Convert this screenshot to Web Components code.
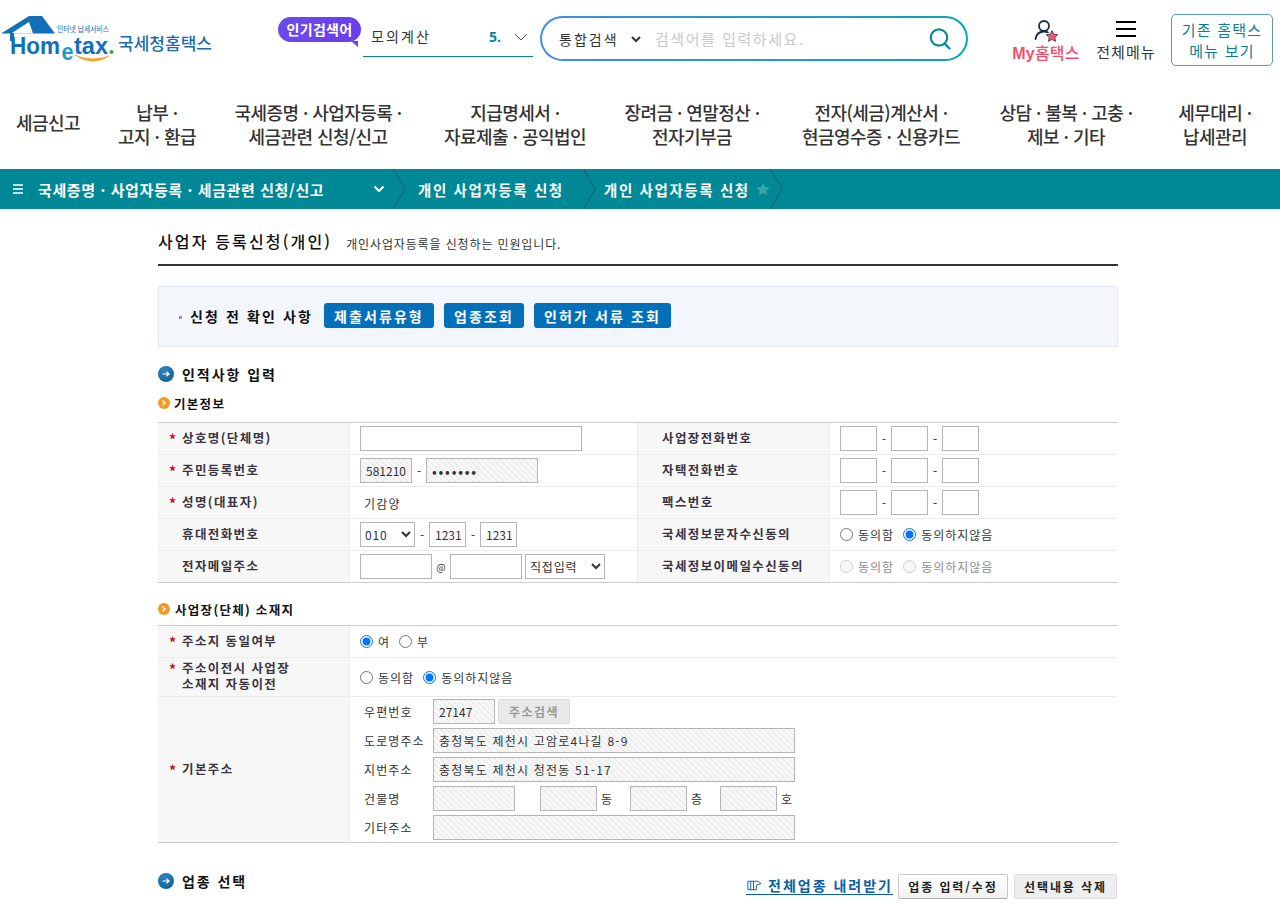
<!DOCTYPE html>
<html lang="ko">
<head>
<meta charset="utf-8">
<title>사업자 등록신청(개인)</title>
<style>
html,body{margin:0;padding:0;background:#fff;overflow:hidden;height:905px}
body{font-family:"Noto Sans CJK KR","Noto Sans",sans-serif;color:#333}
</style>
</head>
<body>
<ht-header></ht-header>
<ht-gnb>
  <ht-gnb-item w="96" solo>세금신고</ht-gnb-item>
  <ht-gnb-item w="122">납부 ·<br>고지 · 환급</ht-gnb-item>
  <ht-gnb-item w="200">국세증명 · 사업자등록 ·<br>세금관련 신청/신고</ht-gnb-item>
  <ht-gnb-item w="194">지급명세서 ·<br>자료제출 · 공익법인</ht-gnb-item>
  <ht-gnb-item w="160">장려금 · 연말정산 ·<br>전자기부금</ht-gnb-item>
  <ht-gnb-item w="218">전자(세금)계산서 ·<br>현금영수증 · 신용카드</ht-gnb-item>
  <ht-gnb-item w="152">상담 · 불복 · 고충 ·<br>제보 · 기타</ht-gnb-item>
  <ht-gnb-item w="138" shift="8">세무대리 ·<br>납세관리</ht-gnb-item>
</ht-gnb>
<ht-crumbs></ht-crumbs>
<ht-page>
  <ht-title sub="개인사업자등록을 신청하는 민원입니다.">사업자 등록신청(개인)</ht-title>
  <ht-check>
    <ht-btn style="width:110px">제출서류유형</ht-btn><ht-btn style="width:80px">업종조회</ht-btn><ht-btn style="width:137px">인허가 서류 조회</ht-btn>
  </ht-check>
  <ht-section style="margin-top:18px">인적사항 입력</ht-section>
  <ht-sub style="margin-top:12px">기본정보</ht-sub>
  <ht-table style="margin-top:11px">
    <ht-th req>상호명(단체명)</ht-th>
    <ht-td><ht-box style="width:222px"></ht-box></ht-td>
    <ht-th>사업장전화번호</ht-th>
    <ht-td last><ht-box style="width:37px"></ht-box><ht-dash>-</ht-dash><ht-box style="width:37px"></ht-box><ht-dash>-</ht-dash><ht-box style="width:37px"></ht-box></ht-td>

    <ht-th req>주민등록번호</ht-th>
    <ht-td><ht-box hatch num style="width:52px">581210</ht-box><ht-dash>-</ht-dash><ht-box hatch dots style="width:112px">•••••••</ht-box></ht-td>
    <ht-th>자택전화번호</ht-th>
    <ht-td last><ht-box style="width:37px"></ht-box><ht-dash>-</ht-dash><ht-box style="width:37px"></ht-box><ht-dash>-</ht-dash><ht-box style="width:37px"></ht-box></ht-td>

    <ht-th req>성명(대표자)</ht-th>
    <ht-td><ht-plain>기감양</ht-plain></ht-td>
    <ht-th>팩스번호</ht-th>
    <ht-td last><ht-box style="width:37px"></ht-box><ht-dash>-</ht-dash><ht-box style="width:37px"></ht-box><ht-dash>-</ht-dash><ht-box style="width:37px"></ht-box></ht-td>

    <ht-th>휴대전화번호</ht-th>
    <ht-td><ht-select w="55" opt="010"></ht-select><ht-dash>-</ht-dash><ht-box num style="width:37px">1231</ht-box><ht-dash>-</ht-dash><ht-box num style="width:37px">1231</ht-box></ht-td>
    <ht-th>국세정보문자수신동의</ht-th>
    <ht-td last><ht-radio name="sms">동의함</ht-radio><ht-radio name="sms" checked>동의하지않음</ht-radio></ht-td>

    <ht-th end>전자메일주소</ht-th>
    <ht-td end><ht-box style="width:72px"></ht-box><ht-dash at>@</ht-dash><ht-box style="width:72px"></ht-box><ht-select w="80" opt="직접입력" style="margin-left:3px"></ht-select></ht-td>
    <ht-th end>국세정보이메일수신동의</ht-th>
    <ht-td end last><ht-radio name="em" disabled>동의함</ht-radio><ht-radio name="em" disabled>동의하지않음</ht-radio></ht-td>
  </ht-table>

  <ht-sub style="margin-top:18px;gap:5px">사업장(단체) 소재지</ht-sub>
  <ht-table wide style="margin-top:8px">
    <ht-th req h="32">주소지 동일여부</ht-th>
    <ht-td h="32" last><ht-radio name="same" checked>여</ht-radio><ht-radio name="same">부</ht-radio></ht-td>
    <ht-th req h="39">주소이전시 사업장<br>소재지 자동이전</ht-th>
    <ht-td h="39" last><ht-radio name="mv">동의함</ht-radio><ht-radio name="mv" checked>동의하지않음</ht-radio></ht-td>
    <ht-th req end h="146">기본주소</ht-th>
    <ht-td end last h="146">
      <ht-addr>
        <ht-addr-row label="우편번호"><ht-box hatch num style="width:62px">27147</ht-box><ht-mini>주소검색</ht-mini></ht-addr-row>
        <ht-addr-row label="도로명주소"><ht-box hatch style="width:362px">충청북도 제천시 고암로4나길 8-9</ht-box></ht-addr-row>
        <ht-addr-row label="지번주소"><ht-box hatch style="width:362px">충청북도 제천시 청전동 51-17</ht-box></ht-addr-row>
        <ht-addr-row label="건물명"><ht-box hatch style="width:82px"></ht-box><ht-box hatch style="width:57px;margin-left:25px"></ht-box><ht-unit>동</ht-unit><ht-box hatch style="width:57px"></ht-box><ht-unit>층</ht-unit><ht-box hatch style="width:57px"></ht-box><ht-unit>호</ht-unit></ht-addr-row>
        <ht-addr-row label="기타주소"><ht-box hatch style="width:362px"></ht-box></ht-addr-row>
      </ht-addr>
    </ht-td>
  </ht-table>

  <ht-biz-head style="margin-top:28px"></ht-biz-head>
</ht-page>

<script>
const FONT = '"Noto Sans CJK KR","Noto Sans",sans-serif';
function def(name, css, html, extra){
  class C extends HTMLElement{
    constructor(){super();this.attachShadow({mode:'open'}).innerHTML='<style>'+css+'</style>'+(typeof html==='function'?'':html);}
    connectedCallback(){
      if(typeof html==='function'){this.shadowRoot.innerHTML='<style>'+css+'</style>'+html(this);}
      if(extra)extra(this);
    }
  }
  customElements.define(name,C);
}

/* ---------- header ---------- */
def('ht-logo',':host{display:block;width:212px;height:50px;flex:none}svg{display:block}',`
<svg width="212" height="50" viewBox="0 0 212 50">
  <path d="M1 18.5 L29 1 L42 1 L55 18.5 Z" fill="#1270b8"/>
  <path d="M11 18.5 L29 7 L33 18.5 Z" fill="#fff"/>
  <path d="M10 18 H14 V26 H10 Z" fill="#1270b8"/>
  <text x="10" y="39" font-family="Liberation Sans" font-weight="700" font-size="24.5" fill="#1270b8" textLength="50" lengthAdjust="spacingAndGlyphs">Hom</text>
  <text x="61.5" y="45" font-family="Liberation Sans" font-weight="700" font-size="23" fill="#1a9bc4" textLength="12" lengthAdjust="spacingAndGlyphs">e</text>
  <text x="74" y="39" font-family="Liberation Sans" font-weight="700" font-size="24" fill="#1270b8" textLength="34" lengthAdjust="spacingAndGlyphs">tax</text>
  <circle cx="111.5" cy="37" r="2" fill="#3da535"/>
  <path d="M75 40 Q92 52 109 41 Q92 47 75 40 Z" fill="#f3a52c" stroke="#f3a52c" stroke-width=".6"/>
  <text x="57" y="17" font-family="Noto Sans CJK KR" font-size="8" fill="#1a6cb0" textLength="52" lengthAdjust="spacingAndGlyphs">인터넷 납세서비스</text>
  <text x="118" y="35" font-family="Noto Sans CJK KR" font-weight="500" font-size="16.5" fill="#1a6cb0" textLength="94" lengthAdjust="spacingAndGlyphs">국세청홈택스</text>
</svg>`);

def('ht-badge',`:host{display:block;position:relative;flex:none;width:83px;height:25px;margin:17px 0 0 66px;border-radius:13px;background:linear-gradient(90deg,#6a4be8,#6a3df0);color:#fff;font-size:14px;font-weight:700;line-height:24px;text-align:center;letter-spacing:.3px}
:host::after{content:"";position:absolute;right:3px;bottom:-5px;border-left:7px solid transparent;border-top:6px solid #6a3df0}`,'<slot></slot>');

def('ht-rank',`:host{display:flex;align-items:center;flex:none;box-sizing:border-box;width:170px;height:40px;margin:17px 0 0 2px;padding:0 5px 0 8px;border-bottom:1px solid #008896;font-size:14px;color:#333;letter-spacing:2.1px}
.t{flex:1;padding-bottom:1px}b{color:#008896;font-family:"Open Sans",sans-serif;font-size:14px;margin-right:13px;letter-spacing:0}svg{display:block}`,
`<span class="t">모의계산</span><b>5.</b><svg width="14" height="8" viewBox="0 0 14 8"><path d="M1 1 L7 7 L13 1" fill="none" stroke="#555" stroke-width="1"/></svg>`);

def('ht-search',`:host{display:flex;align-items:center;flex:none;box-sizing:border-box;width:428px;height:45px;margin:16px 0 0 7px;padding:0 14px 0 13px;border:2px solid transparent;border-radius:23px;background:linear-gradient(#fff,#fff) padding-box,linear-gradient(90deg,#3f8fe6,#07a8b4) border-box}
select{border:0;background:#fff;font:14px ${FONT};color:#333;width:89px;padding:0;outline:0;letter-spacing:2px}
.ph{flex:1;font-size:15px;color:#c9c9c9;letter-spacing:1.55px;margin-left:11px}svg{display:block}`,
`<select><option>통합검색</option></select><span class="ph">검색어를 입력하세요.</span><svg width="24" height="24" viewBox="0 0 24 24"><circle cx="11" cy="10.5" r="8.2" fill="none" stroke="#0a8a98" stroke-width="2.2"/><path d="M16.5 16.5 L21.5 21.5" stroke="#0a8a98" stroke-width="2.4" stroke-linecap="round"/></svg>`);

def('ht-my',`:host{display:flex;flex-direction:column;align-items:center;flex:none;width:68px;margin:19px 0 0 44px;font-size:16px;font-weight:500;color:#f2506e;letter-spacing:.2px;line-height:22px;white-space:nowrap}svg{display:block;margin-bottom:-2px}b{font-family:"Liberation Sans",sans-serif;font-weight:700}`,
`<svg width="28" height="24" viewBox="0 0 28 24"><circle cx="12" cy="7" r="5" fill="none" stroke="#1b2a49" stroke-width="1.8"/><path d="M3.5 20 C4.5 14 8 12.5 12 12.5 C13.5 12.5 15 12.8 16 13.4" fill="none" stroke="#1b2a49" stroke-width="1.8" stroke-linecap="round"/><path d="M20 11.5 L21.8 15.2 L25.8 15.7 L22.9 18.4 L23.6 22.4 L20 20.5 L16.4 22.4 L17.1 18.4 L14.2 15.7 L18.2 15.2 Z" fill="#f4566f" stroke="#1b2a49" stroke-width=".7"/></svg><span><b>My</b>홈택스</span>`);

def('ht-allmenu',`:host{display:flex;flex-direction:column;align-items:center;flex:none;width:60px;margin:21px 0 0 16px;font-size:15px;color:#333;letter-spacing:1.1px;line-height:22px;white-space:nowrap}svg{display:block;margin-bottom:4px}`,
`<svg width="20" height="16" viewBox="0 0 20 16"><path d="M0 1 H20 M0 8 H20 M0 15 H20" stroke="#000" stroke-width="2"/></svg><span>전체메뉴</span>`);

def('ht-old',`:host{display:block;flex:none;box-sizing:border-box;width:102px;height:52px;margin:14px 0 0 15px;border:1px solid #5a9ea8;border-radius:5px;color:#0b7f8c;font-size:15px;line-height:21px;text-align:center;padding-top:4px;letter-spacing:1.2px}`,'<slot></slot>');

def('ht-header',`:host{display:flex;align-items:flex-start;height:85px}ht-logo{margin-top:15px}`,
`<ht-logo></ht-logo><ht-badge>인기검색어</ht-badge><ht-rank></ht-rank><ht-search></ht-search><ht-my></ht-my><ht-allmenu></ht-allmenu><ht-old>기존 홈택스<br>메뉴 보기</ht-old>`);

/* ---------- gnb ---------- */
def('ht-gnb',`:host{display:flex;align-items:center;box-sizing:border-box;height:84px;padding-bottom:6px}`,'<slot></slot>');
def('ht-gnb-item',`:host{display:block;flex:none;box-sizing:border-box;text-align:center;font-size:18px;font-weight:500;letter-spacing:-.55px;line-height:24px;color:#333}:host([solo]){margin-bottom:4px}`,'<slot></slot>',
 el=>{el.style.width=el.getAttribute('w')+'px';if(el.hasAttribute('shift'))el.style.paddingLeft=el.getAttribute('shift')+'px';});

/* ---------- crumbs ---------- */
const SEP='<svg width="13" height="40" viewBox="0 0 13 40" style="flex:none"><path d="M0.5 0 L12 20 L0.5 40" fill="none" stroke="#0a5a6a" stroke-width="1"/></svg>';
def('ht-crumbs',`:host{display:flex;align-items:center;height:40px;background:#008896;color:#fff}
.burger{margin:0 15px 0 13px}.sec{display:block;width:287px;font-size:15px;font-weight:700;letter-spacing:.6px;white-space:nowrap}.cv{margin:0 8px 0 48px}
.a{font-size:14.5px;font-weight:700;letter-spacing:1.6px;white-space:nowrap;margin-left:12px;margin-right:19px;width:146px}svg{display:block;flex:none}`,
`<svg class="burger" width="10" height="10" viewBox="0 0 10 10"><path d="M0 1 H10 M0 5 H10 M0 9 H10" stroke="#fff" stroke-width="1.6"/></svg>
<span class="sec">국세증명 · 사업자등록 · 세금관련 신청/신고</span>
<svg class="cv" width="12" height="8" viewBox="0 0 12 8"><path d="M1.5 1.5 L6 6 L10.5 1.5" fill="none" stroke="#fff" stroke-width="2"/></svg>
${SEP}<span class="a">개인 사업자등록 신청</span>${SEP}<span class="a" style="margin-left:8px;margin-right:6px">개인 사업자등록 신청</span>
<svg width="14" height="14" viewBox="0 0 14 14"><path d="M7 0.5 L9 5 L13.8 5.4 L10.2 8.6 L11.3 13.4 L7 10.9 L2.7 13.4 L3.8 8.6 L0.2 5.4 L5 5 Z" fill="#37a4ae"/></svg>
${SEP}`);

/* ---------- page ---------- */
def('ht-page',`:host{display:block;width:960px;margin-left:158px}`,'<slot></slot>');
def('ht-title',`:host{display:flex;align-items:flex-start;height:57px;box-sizing:border-box;padding-top:20px;border-bottom:2px solid #333;color:#111;font-size:16px;line-height:24px;font-weight:500;letter-spacing:2.15px}
.s{font-size:12px;line-height:18px;font-weight:400;letter-spacing:.87px;color:#333;margin:6px 0 0 14px}`,
 el=>`<slot></slot><span class="s">${el.getAttribute('sub')}</span>`);
def('ht-check',`:host{display:flex;align-items:center;box-sizing:border-box;height:61px;margin-top:20px;padding:0 0 2px 20px;background:#f3f6fb;border:1px solid #e4e9f1}
i{width:3px;height:3px;background:#999;margin-right:8px;margin-top:3px}.t{font-size:14px;font-weight:700;color:#111;letter-spacing:2.1px;margin-right:11px}
.g{display:flex;gap:10px}`,
`<i></i><span class="t">신청 전 확인 사항</span><span class="g"><slot></slot></span>`);
def('ht-btn',`:host{display:inline-flex;align-items:center;justify-content:center;height:25px;box-sizing:border-box;background:#0270b9;color:#fff;border-radius:3px;font-size:14px;font-weight:700;letter-spacing:2.1px;white-space:nowrap}`,'<slot></slot>');
def('ht-section',`:host{display:flex;align-items:center;gap:8px;height:18px;font-size:14px;font-weight:700;color:#111;letter-spacing:1.95px}svg{display:block}`,
`<svg width="16" height="16" viewBox="0 0 16 16"><defs><radialGradient id="g" cx=".4" cy=".3" r=".8"><stop offset="0" stop-color="#2b87c2"/><stop offset="1" stop-color="#15608f"/></radialGradient></defs><circle cx="8" cy="8" r="8" fill="url(#g)"/><path d="M4.5 8 H10.5 M8.5 5.8 L11 8 L8.5 10.2" fill="none" stroke="#fff" stroke-width="1.2"/></svg><slot></slot>`);
def('ht-sub',`:host{display:flex;align-items:center;gap:4px;height:16px;font-size:12.5px;font-weight:700;color:#111;letter-spacing:1.3px}svg{display:block}`,
`<svg width="12" height="12" viewBox="0 0 12 12"><circle cx="6" cy="6" r="6" fill="#f09a27"/><path d="M4.5 3.5 L7 6 L4.5 8.5" fill="none" stroke="#fff" stroke-width="1.3"/></svg><slot></slot>`);

def('ht-table',`:host{display:grid;grid-template-columns:192px 288px 192px 288px;border-top:1px solid #ccc}
:host([wide]){grid-template-columns:192px 768px}`,'<slot></slot>');
def('ht-th',`:host{display:flex;align-items:center;box-sizing:border-box;position:relative;height:var(--h,32px);padding:0 0 2px 24px;background:#f7f7f7;border-right:1px solid #ececec;border-bottom:1px solid #ececec;font-size:12.5px;font-weight:700;line-height:16px;color:#3a3340;letter-spacing:1.4px}
:host([end]){border-bottom-color:#ccc}
.star{position:absolute;left:11px;top:50%;margin-top:-7px;color:#c40f1e;font-size:14px;line-height:14px;font-weight:700;letter-spacing:0}
:host([h="39"]) .star{top:4px;margin-top:0}.l{display:block}`,
 el=>`${el.hasAttribute('req')?'<span class="star">*</span>':''}<span class="l"><slot></slot></span>`,
 el=>{if(el.getAttribute('h'))el.style.setProperty('--h',el.getAttribute('h')+'px');});
def('ht-td',`:host{display:flex;align-items:center;box-sizing:border-box;height:var(--h,32px);padding-left:10px;border-bottom:1px solid #ececec;border-right:1px solid #ececec}
:host([last]){border-right:0}:host([end]){border-bottom-color:#ccc}`,'<slot></slot>',
 el=>{if(el.getAttribute('h'))el.style.setProperty('--h',el.getAttribute('h')+'px');});
def('ht-box',`:host{display:inline-flex;align-items:center;flex:none;box-sizing:border-box;height:25px;padding:0 5px;border:1px solid #b5b5b5;background:#fff;color:#333;font-size:12px;letter-spacing:1.2px;white-space:nowrap;overflow:hidden}
:host([hatch]){background:repeating-linear-gradient(45deg,#f7f7f7 0,#f7f7f7 3px,#e6e6e6 3px,#e6e6e6 4.24px)}
:host([num]){letter-spacing:0}
:host([dots]){letter-spacing:1.8px;font-size:14px;padding-left:5px}
input{width:100%;height:100%;border:0;padding:0;margin:0;background:transparent;outline:0}`,'<slot><input aria-label="입력" tabindex="-1"></slot>',
 el=>{if(el.hasAttribute('hatch')){const i=el.shadowRoot.querySelector('input');if(i)i.disabled=true;}});
def('ht-dash',`:host{display:block;flex:none;width:14px;text-align:center;font-size:12px;color:#333;line-height:16px}:host([at]){width:18px;font-size:10px}`,'<slot></slot>');
def('ht-plain',`:host{display:block;padding:2px 0 0 4px;font-size:12px;letter-spacing:1.2px;color:#333}`,'<slot></slot>');
def('ht-select',`:host{display:inline-block;flex:none}select{display:block;box-sizing:border-box;height:25px;border:1px solid #b5b5b5;background:#fff;border-radius:0;font:12px ${FONT};color:#333;padding:0;letter-spacing:.8px;outline:0}`,
 el=>`<select style="width:${el.getAttribute('w')}px"><option>${el.getAttribute('opt')}</option></select>`);
def('ht-radio',`:host{display:inline-flex;align-items:center;flex:none;margin-right:9px;font-size:12px;letter-spacing:1px;color:#333}
input{width:13px;height:13px;margin:0 5px 0 0}:host([disabled]){color:#8c8c8c}`,
 el=>`<input type="radio" name="${el.getAttribute('name')}" ${el.hasAttribute('checked')?'checked':''} ${el.hasAttribute('disabled')?'disabled':''}><slot></slot>`);
def('ht-addr',`:host{display:flex;flex-direction:column;gap:4px;margin-left:4px}`,'<slot></slot>');
def('ht-addr-row',`:host{display:flex;align-items:center;height:25px}.l{width:69px;flex:none;font-size:12px;letter-spacing:1.1px;color:#333;white-space:nowrap}`,
 el=>`<span class="l">${el.getAttribute('label')}</span><slot></slot>`);
def('ht-mini',`:host{display:inline-flex;align-items:center;justify-content:center;box-sizing:border-box;width:72px;height:25px;margin-left:3px;background:#e9e9e9;border:1px solid #ddd;border-radius:2px;color:#999;font-size:12px;font-weight:700;letter-spacing:1.5px}`,'<slot></slot>');
def('ht-unit',`:host{display:block;flex:none;width:33px;padding-left:4px;box-sizing:border-box;font-size:12px;color:#333}`,'<slot></slot>');
def('ht-gray',`:host{display:inline-flex;align-items:center;justify-content:center;box-sizing:border-box;height:25px;border:1px solid #c9c9c9;border-bottom-color:#aaa;border-radius:2px;background:linear-gradient(#fff,#f1f1f1);font-size:12px;font-weight:700;color:#222;letter-spacing:1.9px;white-space:nowrap}
:host([alt]){background:#eeeeee;border-color:#ddd}`,'<slot></slot>');
def('ht-biz-head',`:host{display:flex;align-items:center;height:30px}.sp{flex:1}ht-section{margin-bottom:11px}
.lk{display:inline-flex;align-items:center;gap:6px;color:#0b5da8;font-size:14px;font-weight:700;letter-spacing:2px;border-bottom:1px solid #0b5da8;line-height:17px;margin-right:5px;white-space:nowrap}svg{display:block}`,
`<ht-section>업종 선택</ht-section><span class="sp"></span>
<span class="lk"><svg width="16" height="11" viewBox="0 0 17 11"><path d="M2 1 H13 L16 3.5 L11 5 V10 H2 Z M5 1 V10 M8 1 V10" fill="none" stroke="#0b5da8" stroke-width="1"/></svg>전체업종 내려받기</span>
<ht-gray style="width:110px">업종 입력/수정</ht-gray><ht-gray alt style="width:103px;margin:0 1px 0 6px">선택내용 삭제</ht-gray>`);
</script>
</body>
</html>
